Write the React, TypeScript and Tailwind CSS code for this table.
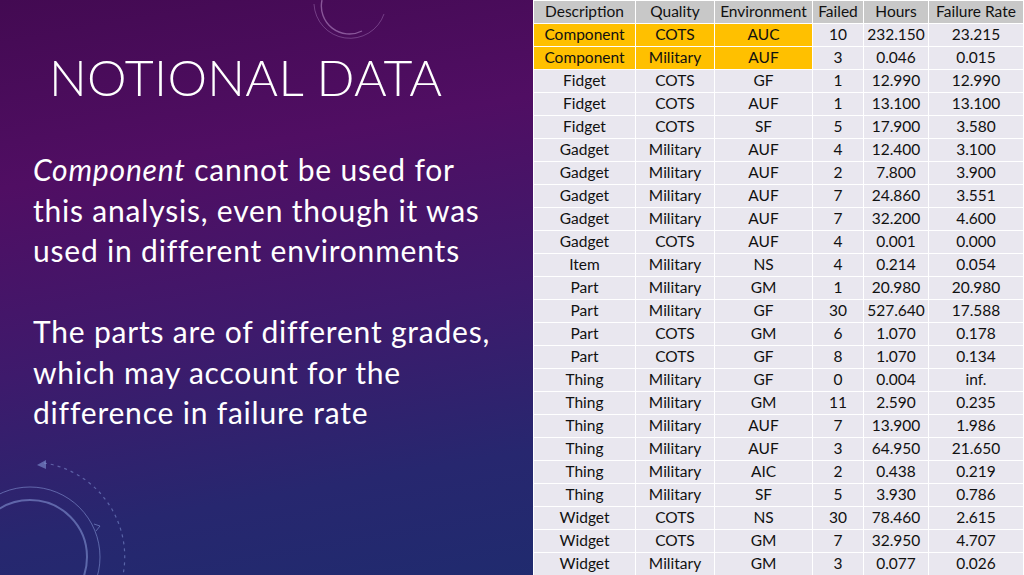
const rows: [string, string, string, string, string, string][] = [
  ["Component", "COTS", "AUC", "10", "232.150", "23.215"],
  ["Component", "Military", "AUF", "3", "0.046", "0.015"],
  ["Fidget", "COTS", "GF", "1", "12.990", "12.990"],
  ["Fidget", "COTS", "AUF", "1", "13.100", "13.100"],
  ["Fidget", "COTS", "SF", "5", "17.900", "3.580"],
  ["Gadget", "Military", "AUF", "4", "12.400", "3.100"],
  ["Gadget", "Military", "AUF", "2", "7.800", "3.900"],
  ["Gadget", "Military", "AUF", "7", "24.860", "3.551"],
  ["Gadget", "Military", "AUF", "7", "32.200", "4.600"],
  ["Gadget", "COTS", "AUF", "4", "0.001", "0.000"],
  ["Item", "Military", "NS", "4", "0.214", "0.054"],
  ["Part", "Military", "GM", "1", "20.980", "20.980"],
  ["Part", "Military", "GF", "30", "527.640", "17.588"],
  ["Part", "COTS", "GM", "6", "1.070", "0.178"],
  ["Part", "COTS", "GF", "8", "1.070", "0.134"],
  ["Thing", "Military", "GF", "0", "0.004", "inf."],
  ["Thing", "Military", "GM", "11", "2.590", "0.235"],
  ["Thing", "Military", "AUF", "7", "13.900", "1.986"],
  ["Thing", "Military", "AUF", "3", "64.950", "21.650"],
  ["Thing", "Military", "AIC", "2", "0.438", "0.219"],
  ["Thing", "Military", "SF", "5", "3.930", "0.786"],
  ["Widget", "COTS", "NS", "30", "78.460", "2.615"],
  ["Widget", "COTS", "GM", "7", "32.950", "4.707"],
  ["Widget", "Military", "GM", "3", "0.077", "0.026"],
]

const headers = ["Description", "Quality", "Environment", "Failed", "Hours", "Failure Rate"]
const widths = ["w-[102px]", "w-[79px]", "w-[98px]", "w-[51px]", "w-[65px]", "w-[95px]"]

export default function App() {
  return (
    <div
      className="relative flex h-[575px] w-[1024px] overflow-hidden bg-[linear-gradient(170deg,#430a52_0%,#500e63_25%,#3e1a6c_50%,#27276f_72%,#1b2d6e_100%)] font-['Lato','Open_Sans',sans-serif]"
    >
      {/* decorative rings */}
      <svg className="absolute left-[300px] top-0" width="100" height="50" viewBox="0 0 100 50" fill="none">
        <path d="M14 4 A 36 36 0 0 0 84 14" stroke="#b58ac9" strokeOpacity="0.4" strokeWidth="1" />
        <path d="M22 0 A 28 28 0 0 0 62 31" stroke="#c9a2d9" strokeOpacity="0.5" strokeWidth="1.4" />
      </svg>
      <svg className="absolute left-0 top-[440px]" width="160" height="135" viewBox="0 0 160 135" fill="none">
        <path d="M44 23 A 95 95 0 0 1 123 135" stroke="#8ba0df" strokeOpacity="0.5" strokeWidth="1.2" strokeDasharray="3 4" />
        <path d="M37 25 l9 -5 l0 9 z" fill="#8ba0df" fillOpacity="0.55" />
        <circle cx="30" cy="117" r="70" stroke="#93a7e6" strokeOpacity="0.5" strokeWidth="1" />
        <circle cx="30" cy="117" r="57" stroke="#93a7e6" strokeOpacity="0.5" strokeWidth="2" />
        <path d="M94 84 l6 2 l-4 5" stroke="#93a7e6" strokeOpacity="0.5" strokeWidth="1" />
      </svg>

      <div className="relative flex-1 text-white">
        <h1 className="ml-[49px] mt-[52px] text-[50px] font-light leading-none tracking-[0.3px]">NOTIONAL DATA</h1>
        <div className="ml-[33px] mt-[47px] text-[30px] leading-[40.5px] tracking-[0.8px]">
          <p>
            <i>Component</i> cannot be used for
            <br />
            this analysis, even though it was
            <br />
            used in different environments
          </p>
          <p className="mt-[40.5px]">
            The parts are of different grades,
            <br />
            which may account for the
            <br />
            difference in failure rate
          </p>
        </div>
      </div>

      <table className="w-[490px] shrink-0 table-fixed border-collapse self-start text-center text-[15.5px] text-[#111]">
        <thead>
          <tr className="h-[23px] bg-[#c8c8c8]">
            {headers.map((h, i) => (
              <th key={h} className={`${widths[i]} h-[23px] border-[1.5px] border-white p-0 pb-px font-normal leading-none`}>
                {h}
              </th>
            ))}
          </tr>
        </thead>
        <tbody>
          {rows.map((r, ri) => (
            <tr key={ri} className="h-[23px]">
              {r.map((c, ci) => (
                <td
                  key={ci}
                  className={`h-[23px] border-[1.5px] border-white p-0 pb-px leading-none ${
                    ri < 2 && ci < 3 ? "bg-[#ffc000]" : "bg-[#e9e7ef]"
                  }`}
                >
                  {c}
                </td>
              ))}
            </tr>
          ))}
        </tbody>
      </table>
    </div>
  )
}
